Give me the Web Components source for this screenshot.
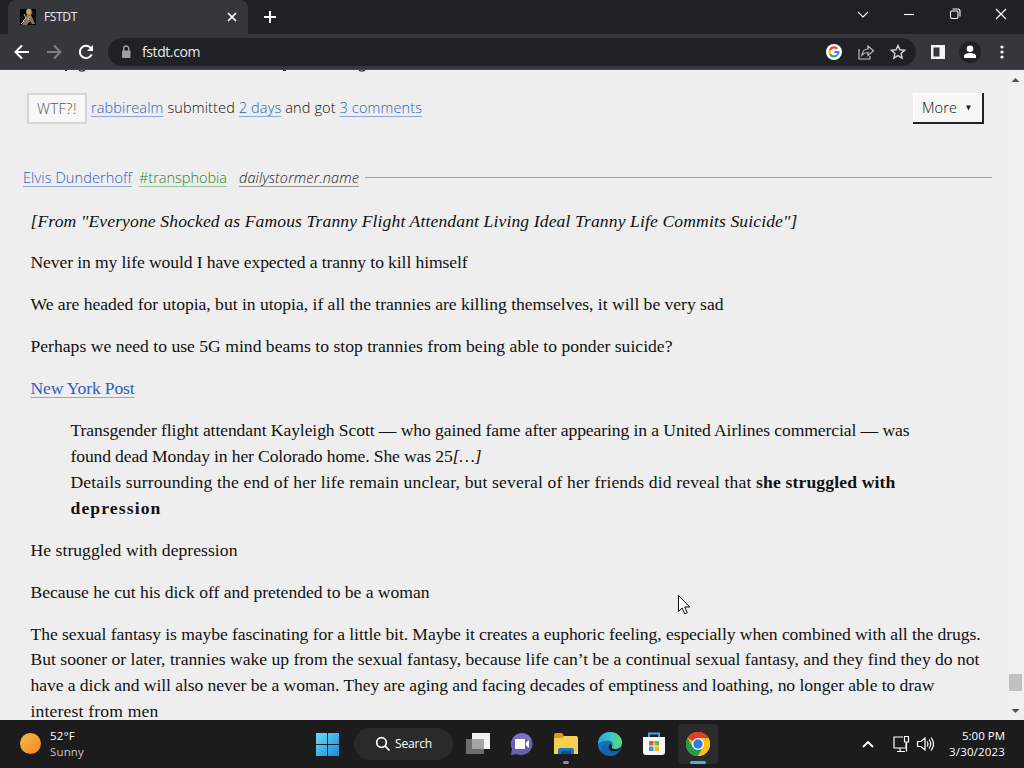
<!DOCTYPE html>
<html lang="en">
<head>
<meta charset="utf-8">
<title>FSTDT</title>
<style>
  html, body { margin: 0; height: 100%; overflow: hidden; }
  body { font-family: "Open Sans", "Noto Sans", sans-serif; background: #eee; }
</style>
</head>
<body>
<desktop-screen>
  <browser-tabs slot="tabs" label="FSTDT"></browser-tabs>
  <browser-toolbar slot="toolbar" url="fstdt.com"></browser-toolbar>
  <page-view slot="page">
    <quote-footer>
      <fit-line slot="by" w="331"><page-link>rabbirealm</page-link> submitted <page-link>2 days</page-link> and got <page-link>3 comments</page-link></fit-line>
    </quote-footer>
    <quote-header>
      <fit-line w="109"><page-link>Elvis Dunderhoff</page-link></fit-line>
      <fit-line w="88" class="tag"><page-link kind="tag">#transphobia</page-link></fit-line>
      <fit-line w="120"><page-link kind="source">dailystormer.name</page-link></fit-line>
    </quote-header>
    <quote-body>
      <p><fit-line w="767"><em>[From "Everyone Shocked as Famous Tranny Flight Attendant Living Ideal Tranny Life Commits Suicide"]</em></fit-line></p>
      <p><fit-line w="437">Never in my life would I have expected a tranny to kill himself</fit-line></p>
      <p><fit-line w="693">We are headed for utopia, but in utopia, if all the trannies are killing themselves, it will be very sad</fit-line></p>
      <p><fit-line w="642">Perhaps we need to use 5G mind beams to stop trannies from being able to ponder suicide?</fit-line></p>
      <p><fit-line w="104"><page-link>New York Post</page-link></fit-line></p>
      <blockquote>
        <fit-line w="839">Transgender flight attendant Kayleigh Scott — who gained fame after appearing in a United Airlines commercial — was</fit-line>
        <fit-line w="411">found dead Monday in her Colorado home. She was 25<em>[…]</em></fit-line>
        <fit-line w="825">Details surrounding the end of her life remain unclear, but several of her friends did reveal that <b>she struggled with</b></fit-line>
        <fit-line w="91"><b>depression</b></fit-line>
      </blockquote>
      <p><fit-line w="207">He struggled with depression</fit-line></p>
      <p><fit-line w="399">Because he cut his dick off and pretended to be a woman</fit-line></p>
      <p>
        <fit-line w="950">The sexual fantasy is maybe fascinating for a little bit. Maybe it creates a euphoric feeling, especially when combined with all the drugs.</fit-line>
        <fit-line w="949">But sooner or later, trannies wake up from the sexual fantasy, because life can’t be a continual sexual fantasy, and they find they do not</fit-line>
        <fit-line w="904">have a dick and will also never be a woman. They are aging and facing decades of emptiness and loathing, no longer able to draw</fit-line>
        <fit-line w="128">interest from men</fit-line>
      </p>
    </quote-body>
  </page-view>
  <task-bar slot="taskbar"></task-bar>
  <mouse-pointer slot="pointer"></mouse-pointer>
</desktop-screen>

<script>
const define = (name, html, setup) => {
  customElements.define(name, class extends HTMLElement {
    constructor() {
      super();
      this.attachShadow({ mode: 'open' }).innerHTML = html.trim();
    }
    connectedCallback() {
      if (setup) setup(this, this.shadowRoot);
    }
  });
};

define('desktop-screen', `
  <style>
    :host { display: grid; grid-template-rows: 34px 36px 650px 48px; width: 1024px; height: 768px; position: relative; overflow: hidden; }
    ::slotted(*) { min-width: 0; min-height: 0; }
  </style>
  <slot name="tabs"></slot>
  <slot name="toolbar"></slot>
  <slot name="page"></slot>
  <slot name="taskbar"></slot>
  <slot name="pointer"></slot>
`);

define('browser-tabs', `
  <style>
    :host { display: flex; background: #202124; color: #e8eaed; font-size: 12px; }
    .tab { display: flex; align-items: center; width: 240px; box-sizing: border-box; margin-left: 8px; padding: 0 10px 0 12px; background: #36373b; border-radius: 8px 8px 0 0; }
    .tab fit-line { margin: -2px 0 0 8px; flex: 1; }
    .new { margin: 9px auto 0 14px; }
    .windows { display: flex; padding-right: 11px; gap: 22px; margin-top: 2px; }
    svg { display: block; fill: none; stroke: #fff; }
  </style>
  <div class="tab">
    <svg width="16" height="16" viewBox="0 0 16 16" stroke="none">
      <path stroke="none" fill="#090707" d="M0 0h16v16H0z"/>
      <path stroke="none" fill="#c7a052" d="M7 0h4l1 4-2 3-3-1-1-3z"/>
      <path stroke="none" fill="#8c7462" d="M7 5l4 1 2 4 2 5h-4l-1-3-3 4H2l3-6z"/>
      <path stroke="#d1baa0" d="M4 5l2 4-3 3M10 7l-2 3 2 3M1 15l3-3"/>
      <path stroke="#512b23" d="M12 2l2 4M9 11l3 4"/>
    </svg>
    <fit-line w="33"></fit-line>
    <svg width="12" height="12" stroke-width="1.7"><path d="M2 2l8 8M10 2l-8 8"/></svg>
  </div>
  <svg class="new" width="16" height="16" stroke-width="2"><path d="M8 2v12M2 8h12"/></svg>
  <div class="windows">
    <svg width="24" height="24" stroke-width="1.1"><path d="M7 10l5 5 5-5"/></svg>
    <svg width="24" height="24" stroke-width="1.1"><path d="M7 12.5h10"/></svg>
    <svg width="24" height="24" stroke-width="1.1"><rect x="7.5" y="9" width="7.5" height="7.5" rx="1.5"/><path d="M9.5 7h5a2.5 2.5 0 0 1 2.5 2.5v5"/></svg>
    <svg width="24" height="24" stroke-width="1.2"><path d="M7 7l10 10M17 7L7 17"/></svg>
  </div>
`, (el, root) => {
  root.querySelector('fit-line').textContent = el.getAttribute('label');
});

define('browser-toolbar', `
  <style>
    :host { display: flex; align-items: center; box-sizing: border-box; padding: 0 10px 0 12px; background: #36373b; color: #e8eaed; font-size: 14px; border-bottom: 1px solid #46474b; }
    .nav { display: flex; gap: 12px; width: 96px; }
    .omni { display: flex; align-items: center; width: 808px; height: 28px; box-sizing: border-box; padding: 0 8px 0 10px; border-radius: 14px; background: #202124; }
    .omni fit-line { margin-left: 8px; flex: 1; }
    .omni .tools { display: flex; gap: 12px; }
    .end { display: flex; align-items: center; margin-left: 12px; gap: 10px; }
    svg { display: block; flex-shrink: 0; fill: none; stroke: #fff; }
  </style>
  <div class="nav">
    <svg width="20" height="20" stroke-width="2"><path d="M17 10H4M10 3.5L3.5 10l6.5 6.5"/></svg>
    <svg width="20" height="20" stroke-width="2" style="stroke:#808185"><path d="M3 10h13M10 3.5L16.5 10 10 16.5"/></svg>
    <svg width="20" height="20" stroke-width="2"><path d="M15.7 12.5A6.2 6.2 0 1 1 14.5 5.6L16 7.5"/><path d="M17 3v6h-6z" fill="#fff" stroke="none"/></svg>
  </div>
  <div class="omni">
    <svg width="16" height="16"><rect x="4" y="6.5" width="8.5" height="7.5" rx="1" fill="#9aa0a6" stroke="none"/><path d="M5.7 7V4.500a2.500 2.500 0 0 1 5 0V7" stroke="#9aa0a6" stroke-width="1.4"/></svg>
    <fit-line w="58"></fit-line>
    <div class="tools">
      <svg width="20" height="20" stroke-width="2.2">
        <circle cx="10" cy="10" r="8" fill="#fff" stroke="none"/>
        <path stroke="#ea4335" d="M6 8a4.5 4.5 0 0 1 7.3-1.3"/>
        <path stroke="#fbbc05" d="M6 8a4.5 4.5 0 0 0 0 4"/>
        <path stroke="#34a853" d="M6 12a4.5 4.5 0 0 0 7 1.3"/>
        <path stroke="#4285f4" d="M10.2 10h4.2a4.5 4.5 0 0 1-1.4 3.3"/>
      </svg>
      <svg width="20" height="20" style="stroke:#bfc1c5" stroke-width="1.2"><path d="M3 7v10h11v-3M6 13c.5-4 2.500-6 6-6V4l5.500 4.800L12 13.500v-3c-3 0-4.500.7-6 2.500z"/></svg>
      <svg width="20" height="20" style="stroke:#d5d7da" stroke-width="1.4"><path d="M10 3.5l1.9 4.3 4.7.5-3.5 3.1 1 4.600-4.100-2.400L5.900 16l1-4.600-3.500-3.100 4.700-.5z"/></svg>
    </div>
  </div>
  <div class="end">
    <svg width="20" height="20"><path d="M3 3h14v14H3zM5.5 5.5v9h6v-9z" fill="#f1f3f4" stroke="none" fill-rule="evenodd"/></svg>
    <svg width="24" height="24"><g stroke="none"><circle cx="12" cy="12" r="11" fill="#202124"/><circle cx="12" cy="8.8" r="3.3" fill="#fff"/><path fill="#fff" d="M6 18v-2c0-2 3-3 6-3s6 1 6 3v2z"/></g></svg>
    <svg width="16" height="20"><g fill="#fff" stroke="none"><circle cx="10" cy="5" r="1.6"/><circle cx="10" cy="10" r="1.6"/><circle cx="10" cy="15" r="1.6"/></g></svg>
  </div>
`, (el, root) => {
  root.querySelector('fit-line').textContent = el.getAttribute('url');
});

define('page-view', `
  <style>
    :host { display: grid; grid-template-columns: 1007px 17px; background: #eee; color: #111; overflow: hidden; }
    .content { min-width: 0; height: 650px; overflow: hidden; }
    .cut { display: block; }
    .scroll { display: flex; flex-direction: column; align-items: center; background: #f0f0f0; }
    .scroll svg { display: block; }
    .thumb { width: 13px; height: 17px; margin-top: auto; background: #c1c1c1; }
  </style>
  <div class="content">
    <svg class="cut" width="1000" height="3" fill="none" stroke="#222" stroke-width="1.2"><path d="M65 .5h2M79 .5q3 1 6 0M283 .5h3M359 .5q3 1 6 0"/></svg>
    <slot></slot>
  </div>
  <div class="scroll">
    <svg width="17" height="17"><path d="M4.500 12l4-4 4 4z" fill="#505050"/></svg>
    <div class="thumb"></div>
    <svg width="17" height="29"><path d="M4.500 18l4 4 4-4z" fill="#505050"/></svg>
  </div>
`);

define('page-link', `
  <style>
    :host { display: inline; color: #2b5fc0; text-decoration: underline 1px #91a7d2; text-underline-offset: 3px; text-decoration-skip-ink: none; }
    :host([kind="tag"]) { color: #258425; text-decoration-color: #9bc09b; }
    :host([kind="source"]) { color: #222; text-decoration-color: #999; font-style: italic; }
  </style><slot></slot>
`);

define('quote-footer', `
  <style>
    :host { display: flex; align-items: center; height: 31px; margin: 20px 23px 0 27px; font-size: 14.5px; font-weight: 350; }
    .vote { box-sizing: border-box; width: 60px; height: 31px; border: 2px solid #d5d5d5; background: #f7f7f7; color: #555; line-height: 27px; padding-left: 8px; margin-right: 4px; }
    ::slotted(fit-line) { margin-top: -2px; }
    .more { box-sizing: border-box; display: flex; align-items: center; width: 71px; height: 31px; margin-left: auto; padding-left: 9px; gap: 9px; background: #f7f7f7; border: solid #222; border-width: 0 2px 2px 0; box-shadow: inset 1px 1px #fff; }
    svg { display: block; margin-top: 1px; }
  </style>
  <div class="vote"><fit-line w="40">WTF?!</fit-line></div>
  <slot name="by"></slot>
  <div class="more"><fit-line w="35">More</fit-line><svg width="6" height="6"><path d="M0 .5h5l-2.500 5z" fill="#222"/></svg></div>
`);

define('quote-header', `
  <style>
    :host { display: flex; align-items: center; height: 20px; margin: 43px 15px 0 23px; font-size: 14.5px; font-weight: 350; }
    ::slotted(fit-line) { line-height: 17px; margin-right: 7px; }
    ::slotted(.tag) { margin-right: 12px; }
    i { flex: 1; height: 1px; background: #a5a5a5; margin: 1px 0 0 -1px; }
  </style>
  <slot></slot><i></i>
`);

define('quote-body', `
  <style>
    :host { display: block; padding: 21.500px 0 0 30.500px; font: 17.600px/25.850px "Liberation Serif", serif; }
    ::slotted(p) { margin: 0 0 16.100px; }
    ::slotted(blockquote) { margin: 0 40px 16.100px; }
  </style>
  <slot></slot>
`);

define('task-bar', `
  <style>
    :host { display: grid; grid-template-columns: 315px 405px 1fr; align-items: center; background: #1c1c1c; color: #fff; font-size: 11.5px; line-height: 16px; }
    svg { display: block; flex-shrink: 0; }
    .weather { display: flex; align-items: center; padding-left: 20px; gap: 9px; }
    .sun { width: 21px; height: 21px; border-radius: 50%; margin-top: -2px; background: linear-gradient(135deg, #f9bd4a, #f58220); }
    .dim { color: #c4c4c4; }
    .apps { display: flex; align-items: center; }
    .search { display: flex; align-items: center; flex-shrink: 0; box-sizing: border-box; width: 99px; height: 32px; margin: 0 5px 0 15px; padding-left: 21px; gap: 4px; border-radius: 16px; background: #2a2a2a; font-size: 12px; }
    .app { display: flex; flex-direction: column; flex-shrink: 0; align-items: center; justify-content: center; width: 40px; height: 40px; margin-right: 4px; border-radius: 4px; position: relative; }
    .app.open { background: #2b2b2b; }
    .app u { position: absolute; bottom: 0; width: 6px; height: 3px; border-radius: 2px; background: #909090; }
    .app.open u { width: 16px; background: #4cafdf; }
    .tray { display: flex; align-items: center; justify-content: flex-end; padding-right: 19px; }
    .tray svg { fill: none; stroke: #fff; stroke-width: 1.2; }
    .clock { display: flex; flex-direction: column; align-items: flex-end; margin-left: 15px; }
  </style>
  <div class="weather">
    <div class="sun"></div>
    <div><fit-line w="25">52°F</fit-line><fit-line w="34" class="dim">Sunny</fit-line></div>
  </div>
  <div class="apps">
    <svg width="24" height="24">
      <defs><linearGradient id="win" x2="1" y2="1"><stop stop-color="#6bdcf8"/><stop offset="1" stop-color="#1689df"/></linearGradient></defs>
      <path fill="url(#win)" d="M1 1h11v11H1zM13 1h11v11H13zM1 13h11v11H1zM13 13h11v11H13z"/>
    </svg>
    <div class="search">
      <svg width="16" height="16" fill="none" stroke="#fff" stroke-width="1.7"><circle cx="6.5" cy="6.5" r="4.8"/><path d="M10 10l4.500 4.500"/></svg>
      <fit-line w="37">Search</fit-line>
    </div>
    <div class="app"><svg width="24" height="24"><path fill="#f4f4f4" d="M6 1h18v16H6z"/><path fill="#777" fill-opacity=".9" d="M0 7h18v15H0z"/><path fill="#a5a5a5" d="M6 7h12v10H6z"/></svg></div>
    <div class="app"><svg width="24" height="24"><path fill="#6660b8" d="M12 1a11 11 0 1 1-5 21L1 23l1-6A11 11 0 0 1 12 1z"/><path fill="#8b83d2" d="M2 8a11 11 0 0 1 20 0z" opacity=".5"/><rect x="5" y="7" width="10" height="10" rx="1" fill="#fff"/><path fill="#fff" d="M16 10.500l3-2.500v8l-3-2.500z"/></svg></div>
    <div class="app"><svg width="26" height="24"><path fill="#d99a1b" d="M1 3q0-2 2-2h6l2 3h12v4H1z"/><path fill="#f9cf52" d="M1 6h8l3-2h11q2 0 2 2v16H1z"/><path fill="#1976c0" d="M5 22v-4q0-2 2-2h12q2 0 2 2v4z"/><path fill="#114f8c" d="M8 19h10v3H8z"/></svg><u></u></div>
    <div class="app">
      <svg width="24" height="24">
        <defs>
          <linearGradient id="edge" x2="1"><stop stop-color="#28a9e8"/><stop offset=".6" stop-color="#3ccbbd"/><stop offset="1" stop-color="#66d768"/></linearGradient>
          <linearGradient id="deep" y2="1" x2="1"><stop stop-color="#168bd6"/><stop offset="1" stop-color="#124b8d"/></linearGradient>
        </defs>
        <circle cx="12" cy="12" r="12" fill="url(#deep)"/>
        <path fill="url(#edge)" d="M0 12C0 5 5 0 12 0c7 0 12 5 12 10.500 0 4-3 6.500-6.500 6.500-3 0-4.500-1-3.500-2.500 1.500-2 .5-6-4-6C5.500 8.500 2 9.500 0 12z"/>
        <path fill="#1c1c1c" d="M14 14.500c-1 1.500.5 2.800 3.500 2.800 2 0 3.700-.7 5.500-2-1.500 3-4 4-7 4-4 0-6-3-5-6 .5-1.700 3-1.500 3 1.200z"/>
        <path fill="#1763ae" d="M8 13c-1 6 4 9 9 7.500l4-.5c-4 5-12 5-16 0-3-4-1-8 3-7z"/>
      </svg>
    </div>
    <div class="app"><svg width="24" height="24"><path fill="none" stroke="#3aa5df" stroke-width="2" d="M7 6V1.500h10V6"/><path fill="#f7f7f7" d="M1 5h22v15q0 3-3 3H4q-3 0-3-3z"/><path fill="#e4572c" d="M7 9h4.500v4.500H7z"/><path fill="#74b52c" d="M12.500 9H17v4.500h-4.500z"/><path fill="#299dd7" d="M7 14.500h4.500V19H7z"/><path fill="#f3b71b" d="M12.500 14.500H17V19h-4.500z"/></svg></div>
    <div class="app open"><svg width="24" height="24"><circle cx="12" cy="12" r="12" fill="#fbc116"/><path fill="#e33b2e" d="M12 12L1.600 6A12 12 0 0 1 22.400 6z"/><path fill="#269b49" d="M12 12l-5.200 3L1.600 6A12 12 0 0 0 12 24l5.200-9z"/><path fill="#fbc116" d="M12 6h10.400A12 12 0 0 1 12 24l5.200-9z"/><circle cx="12" cy="12" r="6" fill="#fff"/><circle cx="12" cy="12" r="4.700" fill="#3478e5"/></svg><u></u></div>
  </div>
  <div class="tray">
    <svg width="14" height="14" style="stroke-width:1.8"><path d="M2 10l5-5 5 5"/></svg>
    <svg width="18" height="18" style="margin-left:17px"><path d="M11 2H2v11h12V8M5 16.500h8M8 13v3.500M12.500 1.500h4V7h-4zM14.500 7v9.500"/></svg>
    <svg width="18" height="18" style="margin-left:6px"><path d="M1.500 6.500H5L9 3v12l-4-3.500H1.500zM11 6.500q2 2.500 0 5M13 4.500q3.500 4.500 0 9M15 2.500q5 6.500 0 13"/></svg>
    <div class="clock"><fit-line w="43">5:00 PM</fit-line><fit-line w="56">3/30/2023</fit-line></div>
  </div>
`);

define('mouse-pointer', `
  <style>
    :host { position: absolute; left: 678px; top: 595px; width: 13px; height: 20px; }
    svg { display: block; }
  </style>
  <svg width="13" height="20"><path d="M.5 .5v16l3.700-3.500 2.500 5.800 2.600-1.100-2.500-5.700h5z" fill="#fff" stroke="#111"/></svg>
`);

// One unwrapped line of text, tracked so that it is w pixels wide
define('fit-line', `
  <style>
    :host { display: block; white-space: nowrap; }
    span { display: inline-block; }
  </style>
  <span><slot></slot></span>
`, (el, root) => {
  const span = root.querySelector('span');
  const fit = () => {
    span.style.letterSpacing = '0';
    const count = el.textContent.length;
    const width = span.getBoundingClientRect().width;
    if (count && width) {
      span.style.letterSpacing = (el.getAttribute('w') - width) / count + 'px';
    }
  };
  requestAnimationFrame(fit);
  fit();
});
</script>
</body>
</html>
